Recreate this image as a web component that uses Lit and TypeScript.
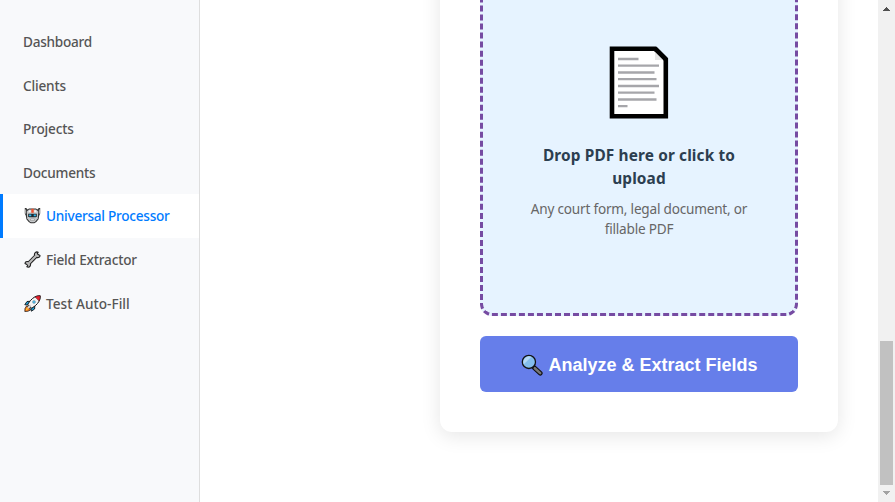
import { LitElement, html, css, svg, nothing } from "lit";
import { customElement } from "lit/decorators.js";
import { classMap } from "lit/directives/class-map.js";

const robot = svg`<svg class="glyph" viewBox="0 0 17 17">
  <path d="M.8 1h1.400l1.400 1.500L5 1.500h7l1.400 1L14.800 1h1.400v5.500l-1 2.200-.6 3.600-2.300 2.700-2 1.200H6.700l-2-1.200-2.300-2.700-.6-3.600-1-2.200z" fill="#333"/>
  <path d="M1.600 2.500v4.200M15.400 2.500v4.200" stroke="#c5c5c5" stroke-width=".9"/>
  <path d="M2.800 4.600 5 2.400h7l2.200 2.200-.4 7-2.300 2.700-1.500.9H7l-1.500-.9-2.300-2.700z" fill="#c6c8ca"/>
  <path d="M7.300 1.800h2.400v4H7.300z" fill="#f4512c"/>
  <path d="M5.200 3.200h1.500v2H4.300zM10.300 3.200h1.500l.9 2h-2.400z" fill="#f3f3f3"/>
  <path d="M4.200 6.800h8.600v2.500l-1 1H5.200l-1-1z" fill="#20262b"/>
  <path d="M5.100 7.400h2.200v1.800H5.100zM9.700 7.400h2.200v1.800H9.700z" fill="#2fb9ee"/>
  <path d="M6.500 12h4v1.400h-4z" fill="#fff" stroke="#777" stroke-width=".5"/>
</svg>`;

const wrench = svg`<svg class="glyph" viewBox="0 0 17 17">
  <path d="M4.300 12.800 12.700 4.300" stroke="#222" stroke-width="4"/>
  <path d="M1 12.500c.1-1.500 1.500-2.300 3-2l2.500 2.500c.3 1.500-.6 3-2.300 3.200L2.800 15.800l.9-1.300-.9-1zM16 4.600c-.1 1.500-1.500 2.300-3 2L10.500 4.100c-.3-1.500.6-3 2.300-3.200l1.400.4-.9 1.300.9 1z" fill="#bcbcbc" stroke="#222" stroke-width="1.100" stroke-linejoin="round"/>
  <path d="M4.300 12.800 12.700 4.300" stroke="#bcbcbc" stroke-width="2"/>
</svg>`;

const rocket = svg`<svg class="glyph" viewBox="0 0 17 17">
  <path d="M2.500 11 5 12.300 6.500 15 3.800 16.300.8 16.500 1 13.500z" fill="#f47b20" stroke="#111" stroke-width=".7"/>
  <path d="M2.300 13.500 4 13l-.5 1.800-1.700.6z" fill="#ffd23c"/>
  <path d="M6 6.300 3 6.500.8 9.700l3.600.4zM10.800 11l-.2 3-3.200 2.200-.6-3.600z" fill="#21a5e3" stroke="#111" stroke-width=".9" stroke-linejoin="round"/>
  <path d="M16.200.8c.3 3.900-1.500 7-5 10l-3.500 2.500-4-4L6.200 5.800c3-3.500 6.100-5.300 10-5z" fill="#f4f4f4" stroke="#111" stroke-width="1"/>
  <path d="M11 1.900C12.600 1 14.400.7 16.200.8c.1 1.900-.2 3.600-1.100 5.200z" fill="#e8222e" stroke="#111" stroke-width=".4"/>
  <circle cx="10" cy="6.900" r="1.500" fill="#45b7ea" stroke="#777" stroke-width=".4"/>
  <path d="M3.700 13.200 7 10" stroke="#d9d9d9" stroke-width="1.200"/>
</svg>`;

const magnifier = svg`<svg class="lens" viewBox="0 0 22 22">
  <path d="m13 13.500 6.300 5.700" stroke="#111" stroke-width="4.600" stroke-linecap="round"/>
  <path d="m13.800 14.200 5.400 4.900" stroke="#777" stroke-width="2.500" stroke-linecap="round"/>
  <circle cx="7.900" cy="7.900" r="6.600" fill="#83bdec" stroke="#111" stroke-width="1.300"/>
  <path d="M2.800 10.300 10.400 2.700A5.900 5.900 0 0 0 2.800 10.300z" fill="#b5d9f5"/>
</svg>`;

const page = svg`<svg class="page" viewBox="0 0 60 74">
  <path d="M3 2.800h43.300l10.500 10.500v56.900H3z" fill="#fff" stroke="#000" stroke-width="4.600"/>
  <path d="M46 4.500v9.500h9.500z" fill="#e6e6e6"/>
  <path d="M46.300 2.800 56.800 13.300" stroke="#000" stroke-width="4.600"/>
  <path d="M9 13h20.500M9 19.700h41M9 26.500h36.500M9 33.200h38.500M9 40h41M9 46.700h36.500M9 53.500h38.500M9 60.200h9.500" stroke="#a6a6aa" stroke-width="2.300"/>
</svg>`;

const items = [
  { key: "dash", label: "Dashboard" },
  { key: "clients", label: "Clients" },
  { key: "projects", label: "Projects" },
  { key: "docs", label: "Documents" },
  { key: "proc", label: "Universal Processor", icon: robot, active: true },
  { key: "field", label: "Field Extractor", icon: wrench },
  { key: "test", label: "Test Auto-Fill", icon: rocket },
];

@customElement("app-root")
export class AppRoot extends LitElement {
  static styles = css`
    :host { display: flex; width: 100%; height: 502px; overflow: hidden; background: #fff;
      font-family: "Noto Sans", "Open Sans", sans-serif; }
    * { box-sizing: border-box; }
    nav { width: 200px; flex: none; padding-top: 20px; background: #f8f9fb; border-right: 1px solid #dedede; }
    .item { display: flex; align-items: center; height: 43.6px; padding-left: 20px; letter-spacing: -.18px;
      border-left: 3px solid transparent; color: #555; font-size: 13.6px; font-weight: 500; white-space: nowrap; }
    .item.active { background: #fff; border-left-color: #007bff; color: #007bff; }
    .dash { letter-spacing: -.26px; }
    .docs { letter-spacing: -.23px; }
    .proc { letter-spacing: -.25px; padding-bottom: 1px; }
    .test { letter-spacing: .03px; }
    .glyph { width: 17px; height: 17px; margin: 0 5px 0 1px; flex: none; }
    main { flex: 1; min-width: 0; display: flex; flex-direction: column; justify-content: flex-end;
      align-items: flex-start; padding: 0 0 70px 240px; }
    .card { flex: none; width: 398px; padding: 40px; border-radius: 12px; background: #fff;
      box-shadow: 0 4px 20px rgba(0, 0, 0, .1); }
    .drop { display: flex; flex-direction: column; align-items: center; height: 336px; padding-top: 63px;
      border: 3px dashed #764ba2; border-radius: 12px; background: #e6f3ff; text-align: center; }
    .page { width: 60px; height: 74px; flex: none; }
    h3 { margin: 24px 0 0; font-size: 15.4px; line-height: 23px; font-weight: 700; color: #2c3e50;
      letter-spacing: .13px; white-space: nowrap; }
    p { margin: 9px 0 0; font-size: 13.6px; line-height: 20px; color: #666; letter-spacing: -.21px; white-space: nowrap; }
    button { display: flex; align-items: center; justify-content: center; width: 100%; height: 56px;
      margin: 20px 0 0; padding: 1px 0 0 1px; border: 0; border-radius: 6px; background: #667eea; color: #fff;
      font: 700 18px/20px "Liberation Sans", Arial, sans-serif; }
    .lens { width: 22px; height: 22px; margin-right: 5px; }
    .scroll { width: 17px; flex: none; display: flex; flex-direction: column; align-items: center; background: #f1f1f1; }
    .up { margin-top: 7px; fill: #505050; }
    .arrow { width: 7px; height: 4px; flex: none; }
    .thumb { width: 13px; height: 144px; margin-top: 330px; background: #c1c1c1; }
    .down { margin-top: 6px; fill: #a3a3a3; }
  `;

  render() {
    return html`
      <nav>
        ${items.map((i) => html`<div class=${classMap({ item: true, active: !!i.active, [i.key]: true })}>
          ${i.icon ?? nothing}<span>${i.label}</span></div>`)}
      </nav>
      <main>
        <section class="card">
          <div class="drop">
            ${page}
            <h3>Drop PDF here or click to<br />upload</h3>
            <p>Any court form, legal document, or<br />fillable PDF</p>
          </div>
          <button>${magnifier}<span>Analyze &amp; Extract Fields</span></button>
        </section>
      </main>
      <div class="scroll">
        <svg class="arrow up" viewBox="0 0 7 4" shape-rendering="crispEdges"><path d="M3 0h1v1h1v1h1v1h1v1H0V3h1V2h1V1h1z" /></svg>
        <div class="thumb"></div>
        <svg class="arrow down" viewBox="0 0 7 4" shape-rendering="crispEdges"><path d="M0 0h7v1H6v1H5v1H4v1H3V3H2V2H1V1H0z" /></svg>
      </div>
    `;
  }
}
